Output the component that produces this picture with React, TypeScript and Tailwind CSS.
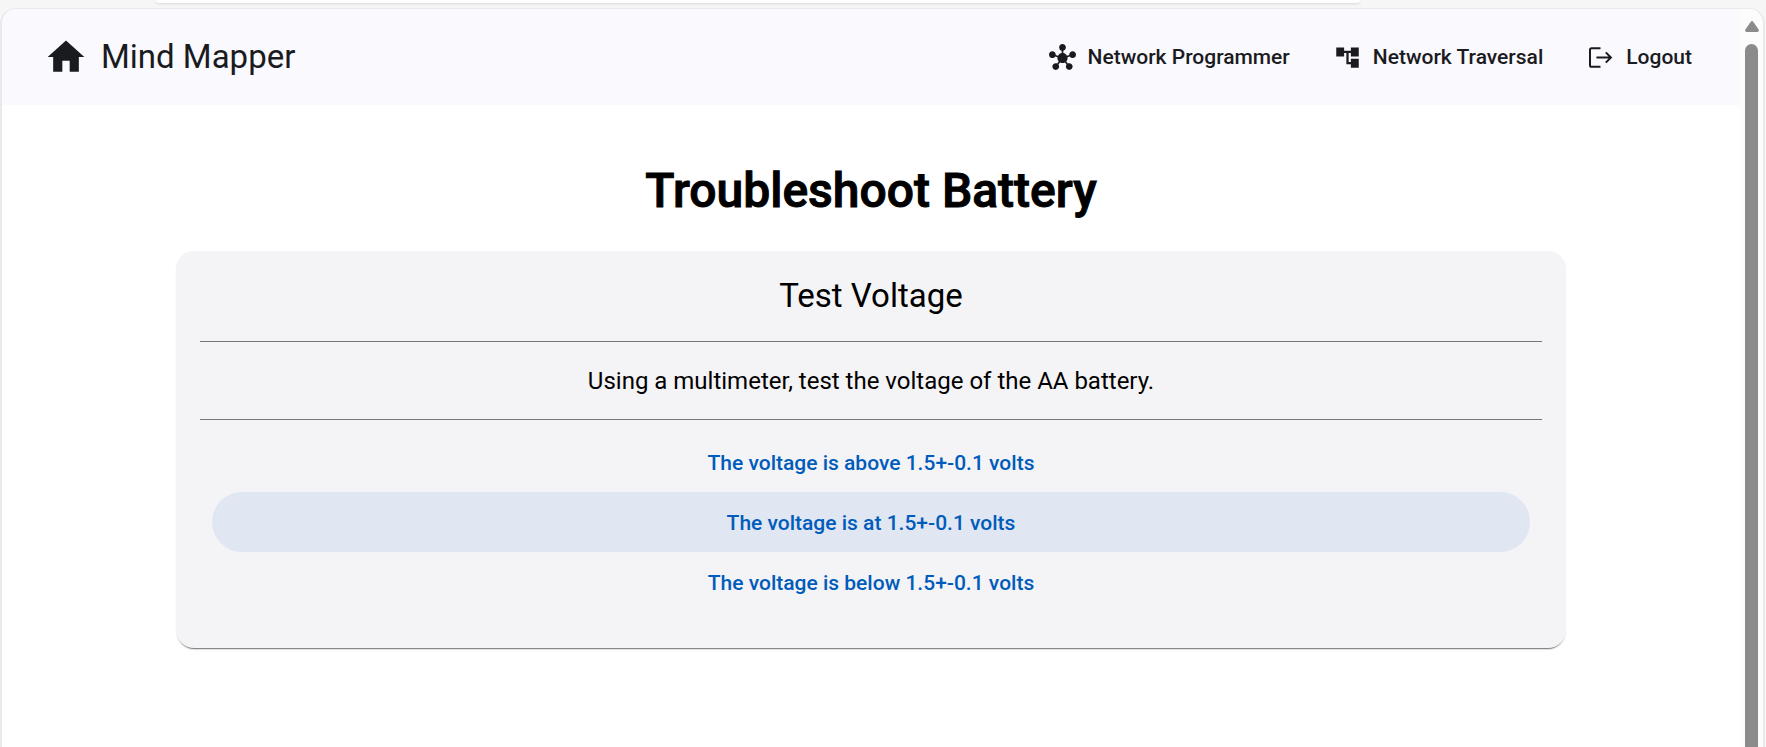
import { MdAccountTree, MdHome, MdHub } from "react-icons/md";

const choices = [
  { label: "The voltage is above 1.5+-0.1 volts", active: false },
  { label: "The voltage is at 1.5+-0.1 volts", active: true },
  { label: "The voltage is below 1.5+-0.1 volts", active: false },
];

function LogoutIcon() {
  return (
    <svg viewBox="0 0 27 27" className="size-[27px] shrink-0" fill="none" stroke="currentColor" strokeWidth="2" aria-hidden="true">
      <path d="M13.5 4.2H4.6Q3 4.2 3 5.8V21.2Q3 22.8 4.6 22.8H13.5" />
      <path d="M9.4 13.5H23.4M18.8 8.4L23.9 13.5L18.8 18.6" />
    </svg>
  );
}

function Header() {
  return (
    <header className="flex h-24 items-center justify-between bg-[#faf9fd] pr-12 pl-[42px] text-[#1a1b1f]">
      <a href="#home" className="flex items-center gap-[13px]">
        <MdHome className="size-11" aria-hidden="true" />
        <span className="text-[33px] leading-[42px]">Mind Mapper</span>
      </a>
      <nav className="flex items-center gap-11 text-[21px] leading-[30px] font-medium">
        <a href="#programmer" className="flex items-center gap-3">
          <MdHub className="size-[27px]" aria-hidden="true" />
          Network Programmer
        </a>
        <a href="#traversal" className="flex items-center gap-3">
          <MdAccountTree className="size-[27px]" aria-hidden="true" />
          Network Traversal
        </a>
        <a href="#logout" className="flex items-center gap-3">
          <LogoutIcon />
          Logout
        </a>
      </nav>
    </header>
  );
}

function ScrollBar() {
  return (
    <div className="flex w-[23px] shrink-0 flex-col items-center gap-3 bg-[#fcfcfc] pt-3" aria-hidden="true">
      <svg viewBox="0 0 14 11" className="h-[11px] w-[14px] shrink-0 fill-[#8b8b8b]">
        <path d="M5.6 1Q7-.8 8.4 1L13.6 8.6Q14.6 11 12.4 11H1.6Q-.6 11 .4 8.6Z" />
      </svg>
      <div className="w-[13px] grow rounded-t-full bg-[#8b8b8b]" />
    </div>
  );
}

export default function App() {
  return (
    <div className="flex min-h-screen flex-col bg-[#f6f6f6] font-[Roboto,sans-serif] text-black">
      <div className="h-2 shrink-0 pr-[406px] pl-[156px]">
        <div className="h-[3px] rounded-b-xl bg-white shadow-sm" />
      </div>
      <div className="mr-px flex grow overflow-hidden rounded-t-2xl border-x-2 border-t border-[#e9e9ea] bg-white">
        <div className="grow">
          <Header />
          <main className="mx-auto w-4/5 pt-[58px]">
            <h1 className="text-center text-[48px] leading-[56px] font-medium [-webkit-text-stroke:1px_black]">
              Troubleshoot Battery
            </h1>
            <section className="mt-8 rounded-[18px] bg-[#f4f3f6] px-6 pt-6 pb-9 shadow-[0_3px_1px_-2px_rgba(0,0,0,0.35),0_2px_2px_-1px_rgba(0,0,0,0.3)]">
              <h2 className="pb-6 text-center text-[33px] leading-[42px]">Test Voltage</h2>
              <p className="border-y border-[#75777f] pt-[21px] pb-5 text-center text-[24px] leading-9">
                Using a multimeter, test the voltage of the AA battery.
              </p>
              <div className="flex flex-col px-3 pt-3">
                {choices.map((choice) => (
                  <button
                    key={choice.label}
                    type="button"
                    className={
                      choice.active
                        ? "h-[60px] rounded-full bg-[#e0e6f2] pt-1 text-[21px] font-medium text-[#005cbb]"
                        : "h-[60px] rounded-full pt-1 text-[21px] font-medium text-[#005cbb]"
                    }
                  >
                    {choice.label}
                  </button>
                ))}
              </div>
            </section>
          </main>
        </div>
        <ScrollBar />
      </div>
    </div>
  );
}
